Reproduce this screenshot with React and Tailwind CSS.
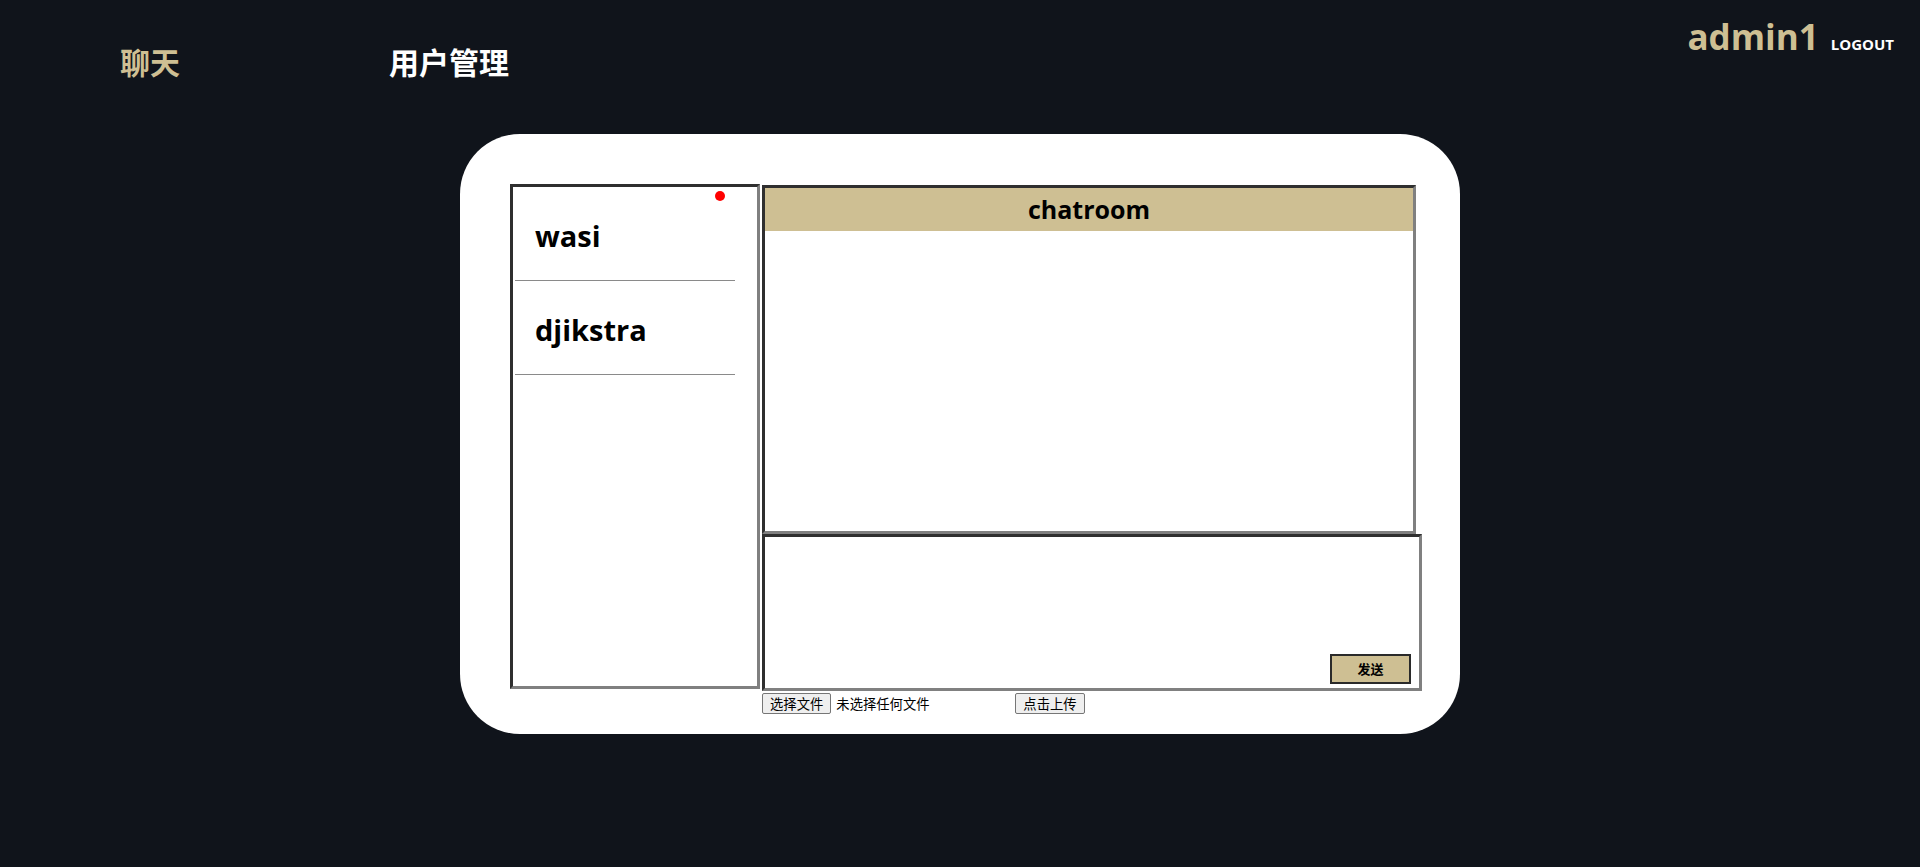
import React from 'react';

const users = [
    { name: 'wasi', unread: true },
    { name: 'djikstra', unread: false },
];

function UserItem({ name, unread }) {
    return (
        <div>
            <div className="relative h-[93px] pl-[22px] pt-[29px]">
                <p className="text-[29px] font-bold leading-[normal] text-black">{name}</p>
                {unread && (
                    <span className="absolute right-[32px] top-[4px] h-[10px] w-[10px] rounded-full bg-[#ff0000]" />
                )}
            </div>
            <div className="ml-[2px] h-px w-[220px] bg-[#8a8a8a]" />
        </div>
    );
}

function FakeButton({ children }) {
    return (
        <button className="h-[21px] rounded-[2px] border border-[#767676] bg-[#efefef] px-[7px] text-[13.33px] leading-none text-black">
            {children}
        </button>
    );
}

export default function App() {
    return (
        <div className="h-[867px] w-full overflow-hidden bg-[#10141b] font-['Open_Sans','Noto_Sans_CJK_SC',sans-serif]">
            {/* Header */}
            <header className="flex h-[134px] items-start justify-between">
                <nav className="flex pl-[120px] pt-[46px] font-['Noto_Sans_CJK_SC',sans-serif] text-[30px] font-bold leading-none">
                    <span className="w-[269px] text-[#cebf93]">聊天</span>
                    <span className="text-white">用户管理</span>
                </nav>
                <div className="flex items-baseline gap-[12px] pr-[26px] pt-[13px]">
                    <span className="text-[35px] font-bold leading-[normal] text-[#cebf93]">admin1</span>
                    <span className="text-[15px] font-bold leading-[normal] text-white">LOGOUT</span>
                </div>
            </header>

            {/* Card */}
            <div className="mx-auto h-[600px] w-[1000px] rounded-[60px] bg-white pl-[50px] pt-[50px]">
                <div className="flex gap-[2px]">
                    {/* User list */}
                    <div className="h-[505px] w-[250px] border-[3px] border-b-[#808080] border-l-[#2f2f2f] border-r-[#808080] border-t-[#2f2f2f]">
                        {users.map((u) => (
                            <UserItem key={u.name} {...u} />
                        ))}
                    </div>

                    {/* Chat column */}
                    <div className="flex w-[660px] flex-col">
                        <div className="mt-px h-[349px] w-[654px] border-[3px] border-b-[#808080] border-l-[#2f2f2f] border-r-[#808080] border-t-[#2f2f2f]">
                            <div className="flex h-[43px] items-center justify-center bg-[#cebf93]">
                                <h3 className="text-[25px] font-bold leading-none text-black">chatroom</h3>
                            </div>
                        </div>

                        <div className="flex h-[157px] w-[660px] flex-col items-end justify-end border-[3px] border-b-[#808080] border-l-[#2f2f2f] border-r-[#808080] border-t-[#2f2f2f] pb-[4px] pr-[8px]">
                            <button className="h-[30px] w-[81px] border-2 border-[#2a2a2a] bg-[#cebf93] font-['Noto_Sans_CJK_SC',sans-serif] text-[13px] font-bold text-black">
                                发送
                            </button>
                        </div>

                        <div className="mt-[2px] flex items-center font-['Noto_Sans_CJK_SC',sans-serif]">
                            <FakeButton>选择文件</FakeButton>
                            <span className="ml-[5px] w-[179px] text-[13.33px] leading-none text-black">未选择任何文件</span>
                            <FakeButton>点击上传</FakeButton>
                        </div>
                    </div>
                </div>
            </div>
        </div>
    );
}
